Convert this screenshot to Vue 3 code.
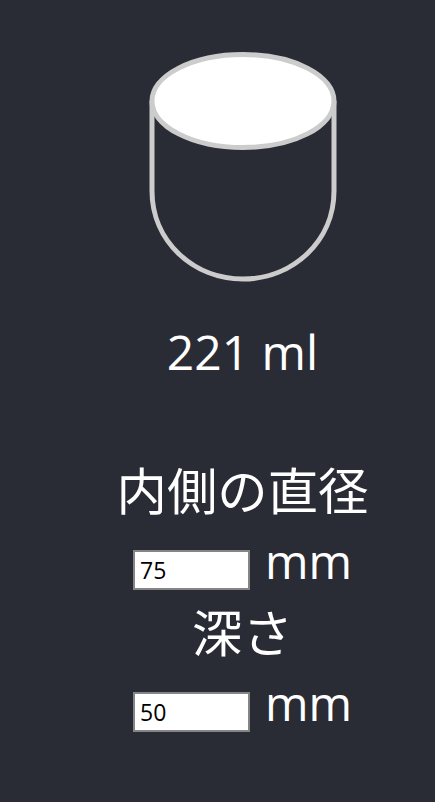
<script setup>
import { ref } from 'vue'
const diameter = ref(75)
const depth = ref(50)
</script>

<template>
  <main class="page">
    <svg class="cup" viewBox="0 0 200 242" width="200" height="242" aria-hidden="true">
      <path class="body" d="M9 60 V150 C9 200 50 238 100 238 C150 238 191 200 191 150 V60" />
      <ellipse class="top" cx="100" cy="60" rx="91" ry="46.5" />
    </svg>
    <p class="volume">221 ml</p>
    <label class="title first" for="dia">内側の直径</label>
    <div class="row">
      <input id="dia" v-model="diameter" class="field" type="text" />
      <span class="unit">mm</span>
    </div>
    <label class="title" for="dep">深さ</label>
    <div class="row">
      <input id="dep" v-model="depth" class="field" type="text" />
      <span class="unit">mm</span>
    </div>
  </main>
</template>

<style scoped>
.page {
  min-height: 802px;
  box-sizing: border-box;
  padding: 41px 0 0 50px;
  background: #2a2c35;
  color: #fff;
  display: flex;
  flex-direction: column;
  align-items: center;
  font-family: "Open Sans", "Noto Sans CJK JP", sans-serif;
}
.cup { display: block; flex: none; }
.body { fill: none; stroke: #ccc; stroke-width: 5; }
.top { fill: #fff; stroke: #ccc; stroke-width: 5; }
.volume {
  margin: 37px 0 0;
  font-size: 48px;
  line-height: 64px;
}
.title {
  font-size: 50.4px;
  line-height: 72px;
}
.first { margin-top: 71px; }
.row {
  display: flex;
  align-items: center;
  gap: 15px;
  height: 70px;
}
.field {
  box-sizing: border-box;
  width: 117px;
  height: 40px;
  margin-top: 16px;
  padding: 1px 5px;
  border: 2px solid #858585;
  background: #fff;
  color: #000;
  font: 23px "Open Sans", sans-serif;
  border-radius: 0;
  outline: none;
}
.unit {
  font-size: 47px;
  line-height: 68px;
  margin-bottom: 2px;
}
</style>

<style>
body { background: #2a2c35; }
</style>
